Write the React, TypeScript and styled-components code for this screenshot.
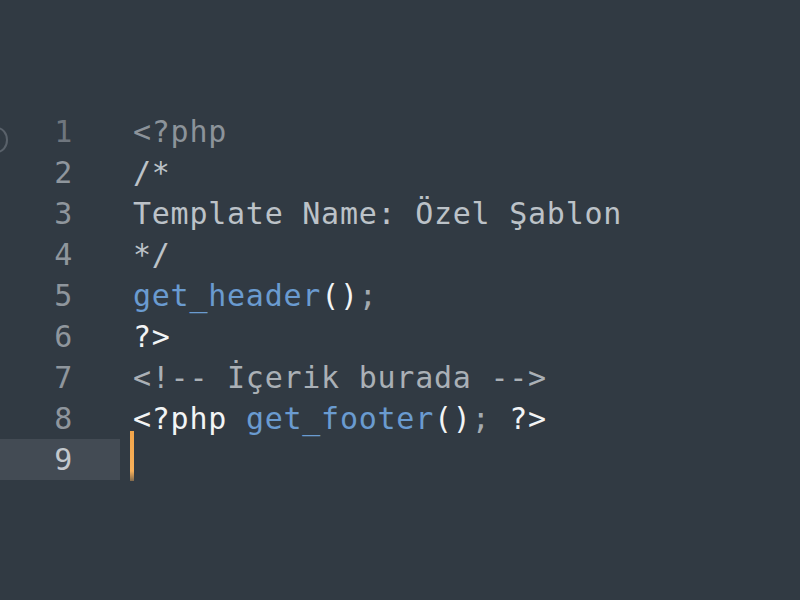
import React from "react";
import styled, { createGlobalStyle } from "styled-components";

const Global = createGlobalStyle`
  html, body { margin: 0; padding: 0; background: #313a43; }
  body { width: 800px; height: 600px; overflow: hidden; }
`;

const Editor = styled.div`
  position: relative;
  width: 800px;
  height: 600px;
  background: #313a43;
  padding-top: 111px;
  box-sizing: border-box;
  font-family: "DejaVu Sans Mono", "Liberation Mono", monospace;
  font-size: 30px;
  letter-spacing: 0.75px;
  line-height: 41px;
`;

const FoldMark = styled.div`
  position: absolute;
  left: -14px;
  top: 127px;
  width: 18px;
  height: 22px;
  border-radius: 50%;
  border: 2px solid #59616a;
`;

const Row = styled.div`
  display: flex;
  height: 41px;
`;

const Gutter = styled.div<{ $active?: boolean; $dim?: boolean }>`
  width: 120px;
  flex: 0 0 120px;
  box-sizing: border-box;
  padding-right: 47px;
  text-align: right;
  color: ${(p) => (p.$active ? "#c3c8cd" : p.$dim ? "#6f767e" : "#8f969d")};
  background: ${(p) => (p.$active ? "#434b54" : "transparent")};
`;

const Code = styled.div`
  position: relative;
  padding-left: 13px;
  white-space: pre;
`;

const Cursor = styled.div`
  position: absolute;
  left: 10px;
  top: -8px;
  width: 4px;
  height: 50px;
  background: linear-gradient(#f2a54a, #f7b05a 80%, rgba(247, 176, 90, 0.4));
`;

type Kind = "dim" | "comment" | "plain" | "fn" | "white" | "punct";

const colors: Record<Kind, string> = {
  dim: "#8c939a",
  comment: "#bcc2c8",
  plain: "#aab0b6",
  fn: "#6a9bd0",
  white: "#f2f4f5",
  punct: "#a4aab0",
};

const Tok = styled.span<{ $k: Kind }>`
  color: ${(p) => colors[p.$k]};
`;

type Line = [Kind, string][];

const lines: Line[] = [
  [["dim", "<?php"]],
  [["comment", "/*"]],
  [["comment", "Template Name: Özel Şablon"]],
  [["comment", "*/"]],
  [
    ["fn", "get_header"],
    ["white", "()"],
    ["punct", ";"],
  ],
  [["white", "?>"]],
  [["plain", "<!-- İçerik burada -->"]],
  [
    ["white", "<?php "],
    ["fn", "get_footer"],
    ["white", "()"],
    ["punct", "; "],
    ["white", "?>"],
  ],
  [],
];

export default function App() {
  return (
    <>
      <Global />
      <Editor>
        <FoldMark />
        {lines.map((line, i) => {
          const active = i === lines.length - 1;
          return (
            <Row key={i}>
              <Gutter $active={active} $dim={i === 0}>
                {i + 1}
              </Gutter>
              <Code>
                {active && <Cursor />}
                {line.map(([k, t], j) => (
                  <Tok key={j} $k={k}>
                    {t}
                  </Tok>
                ))}
              </Code>
            </Row>
          );
        })}
      </Editor>
    </>
  );
}
